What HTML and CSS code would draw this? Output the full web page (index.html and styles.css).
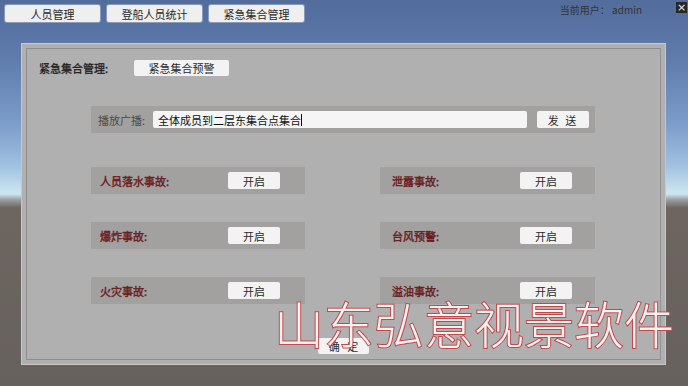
FILE: index.html
```html
<!DOCTYPE html>
<html lang="zh-CN">
<head>
  <meta charset="UTF-8">
  <title>紧急集合管理</title>
  <meta name="viewport" content="width=device-width, initial-scale=1.0">
  <link rel="stylesheet" href="styles.css">
</head>
<body>
  <!-- Top navigation -->
  <div class="topbar">
    <button class="nav-btn">人员管理</button>
    <button class="nav-btn">登船人员统计</button>
    <button class="nav-btn">紧急集合管理</button>
    <span class="user">当前用户： admin</span>
    <span class="close-icon">×</span>
  </div>

  <!-- Main panel -->
  <div class="panel">
    <div class="panel-inner">
      <div class="mgr-row">
        <span class="mgr-label">紧急集合管理:</span>
        <button class="btn btn-wide">紧急集合预警</button>
      </div>

      <div class="broadcast">
        <span class="broadcast-label">播放广播:</span>
        <div class="text-input">全体成员到二层东集合点集合<span class="caret"></span></div>
        <button class="btn btn-send">发 送</button>
      </div>

      <div class="events">
        <div class="event"><span class="event-label">人员落水事故:</span><button class="btn btn-small">开启</button></div>
        <div class="event"><span class="event-label">泄露事故:</span><button class="btn btn-small">开启</button></div>
        <div class="event"><span class="event-label">爆炸事故:</span><button class="btn btn-small">开启</button></div>
        <div class="event"><span class="event-label">台风预警:</span><button class="btn btn-small">开启</button></div>
        <div class="event"><span class="event-label">火灾事故:</span><button class="btn btn-small">开启</button></div>
        <div class="event"><span class="event-label">溢油事故:</span><button class="btn btn-small">开启</button></div>
      </div>

      <div class="footer">
        <button class="btn btn-ok">确 &nbsp; 定</button>
      </div>
    </div>
  </div>

  <!-- Watermark -->
  <div class="watermark">山东弘意视景软件</div>
</body>
</html>
```

FILE: styles.css
```css
/* Base */
* {
  box-sizing: border-box;
  margin: 0;
  padding: 0;
}
body {
  width: 688px;
  height: 386px;
  overflow: hidden;
  position: relative;
  font-family: "Noto Sans CJK SC", "Liberation Sans", sans-serif;
  font-size: 11px;
  color: #2a2a2a;
  background: linear-gradient(180deg,
    #526c9c 0px,
    #5f7cac 60px,
    #7a9ac8 120px,
    #9fc0e0 165px,
    #cde6ef 194px,
    #9a9c9e 200px,
    #6c6560 208px,
    #67615d 386px);
}
button {
  font-family: inherit;
  font-size: 11px;
  color: #2a2a2a;
  border: none;
  cursor: pointer;
}

/* Top bar */
.topbar {
  display: flex;
  align-items: flex-start;
  height: 22px;
  padding: 5px 0 0 5px;
}
.nav-btn {
  width: 95px;
  height: 17px;
  margin-right: 7px;
  background: #efefef;
  border-radius: 2px;
  box-shadow: 0 0 0 1px rgba(255, 255, 255, 0.3);
}
.user {
  margin: -2px 0 0 auto;
  color: #333;
  font-size: 10px;
  line-height: 14px;
}
/* window close button in the corner */
.close-icon {
  display: flex;
  align-items: center;
  justify-content: center;
  width: 11px;
  height: 11px;
  margin: -3px 1px 0 34px;
  background: #262626;
  color: #eeeeee;
  font-family: "DejaVu Sans", sans-serif;
  font-size: 11px;
  line-height: 1;
}

/* Panel */
.panel {
  width: 645px;
  height: 322px;
  margin: 21px 0 0 21px;
  padding: 4px;
  background: #b0b0b0;
  border: 1px solid #c8c8c8;
}
.panel-inner {
  height: 100%;
  border: 1px solid #8d8d8d;
  border-right-color: #939393;
}

.mgr-row {
  display: flex;
  align-items: center;
  height: 16px;
  margin-top: 11px;
  padding-left: 12px;
}
.mgr-label {
  width: 95px;
  color: #222;
  -webkit-text-stroke: 0.3px #222;
}
.btn {
  background: #f3f3f3;
  border-radius: 2px;
}
.btn-wide {
  width: 95px;
  height: 16px;
}

/* Broadcast strip */
.broadcast {
  display: flex;
  align-items: center;
  width: 504px;
  height: 27px;
  margin: 30px 0 0 64px;
  padding-left: 7px;
  background: #a3a1a0;
}
.broadcast-label {
  width: 55px;
  color: #4a4a4a;
}
.text-input {
  display: flex;
  align-items: center;
  width: 374px;
  height: 17px;
  padding-left: 5px;
  margin-right: 10px;
  background: #f5f5f5;
  border-radius: 2px;
  color: #111;
  font-size: 11px;
}
.caret {
  width: 1px;
  height: 12px;
  background: #111;
}
.btn-send {
  width: 52px;
  height: 17px;
  letter-spacing: 2px;
}

/* Event grid */
.events {
  display: grid;
  grid-template-columns: 214px 215px;
  column-gap: 75px;
  row-gap: 28px;
  margin: 34px 0 0 64px;
}
.event {
  display: flex;
  align-items: center;
  height: 27px;
  padding-left: 9px;
  background: #a3a1a0;
}
.event:nth-child(even) {
  padding-left: 12px;
}
.event-label {
  width: 128px;
  color: #6a1c1c;
  -webkit-text-stroke: 0.4px #6a1c1c;
}
.btn-small {
  width: 52px;
  height: 17px;
}

/* Footer */
.footer {
  display: flex;
  justify-content: center;
  margin-top: 34px;
}
.btn-ok {
  width: 51px;
  height: 16px;
}

/* Watermark overlay */
.watermark {
  position: absolute;
  left: 274px;
  top: 294px;
  font-family: "Noto Sans CJK SC", sans-serif;
  font-weight: 300;
  font-size: 50px;
  line-height: 56px;
  color: #f6f1f1;
  -webkit-text-stroke: 2px #c2484b;
  paint-order: stroke fill;
  white-space: nowrap;
}
```
